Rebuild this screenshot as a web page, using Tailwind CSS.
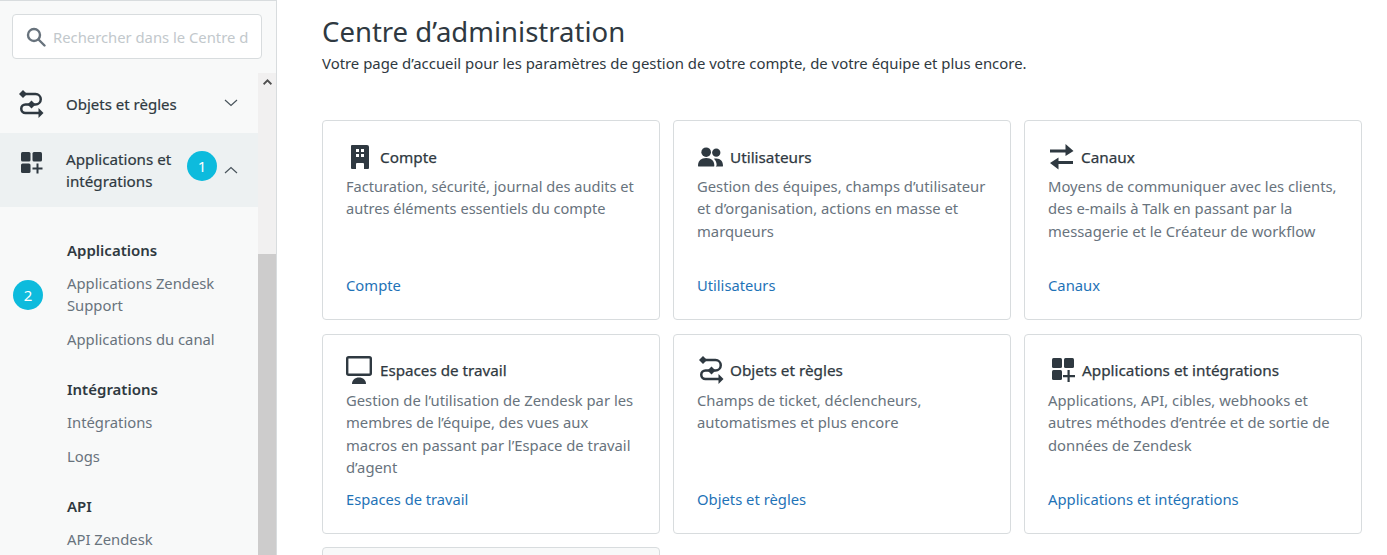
<!DOCTYPE html>
<html lang="fr">
<head>
<meta charset="utf-8">
<script src="https://cdn.jsdelivr.net/npm/@tailwindcss/browser@4"></script>
<title>Centre d'administration</title>
</head>
<body class="bg-white overflow-hidden font-['Noto_Sans',sans-serif]">
<div class="flex h-[555px] w-[1387px] overflow-hidden">
  <aside class="relative w-[277px] shrink-0 h-full bg-[#f8f9f9] border-r border-t border-[#d8dcde] flex flex-col">
    <div class="px-3 pt-[13px] h-[72px] shrink-0">
      <div class="h-[45px] w-[250px] bg-white border border-[#d8dcde] rounded-[4px] flex items-center pl-[13px] overflow-hidden">
        <svg class="w-[20px] h-[20px] shrink-0" viewBox="0 0 20 20" fill="none" stroke="#68737d" stroke-width="2.400"><circle cx="8" cy="8" r="6"/><path d="M12.500 12.500l6 6" stroke-linecap="round"/></svg>
        <span class="ml-[7px] mt-[2px] text-[14.800px] text-[#c2c8cc] whitespace-nowrap overflow-hidden w-[195px]">Rechercher dans le Centre d</span>
      </div>
    </div>
    <div class="flex flex-1 min-h-0">
      <nav class="w-[258px] shrink-0 overflow-hidden">
        <div class="h-[60px] flex items-center relative">
          <svg class="absolute left-[19px] top-[17px] w-[25px] h-[28px]" viewBox="0 0 24 28" fill="none" stroke="#2f3941" stroke-width="2.500"><path d="M4 4H16a5.200 5.200 0 0 1 0 10.500H6a4.250 4.250 0 0 0 0 8.500H20"/><path d="M-0.500 4l4-4 4 4-4 4z" fill="#2f3941" stroke="none"/><path d="M8 14.500l4-4 4 4-4 4z" fill="#2f3941" stroke="none"/><path d="M19 18l5 5-5 5z" fill="#2f3941" stroke="none"/></svg>
          <span class="ml-[66px] mt-[3px] text-[15px] text-[#2f3941] [-webkit-text-stroke:0.2px_#2f3941]">Objets et règles</span>
          <svg class="absolute left-[224px] top-[26px] w-[14px] h-[8px]" viewBox="0 0 14 8" fill="none" stroke="#49545c" stroke-width="1.200"><path d="M1 1l6 5.500L13 1"/></svg>
        </div>
        <div class="h-[74px] bg-[#edf1f2] relative pt-[15px]">
          <svg class="absolute left-[21px] top-[19px] w-[23px] h-[23px]" viewBox="0 0 23 23" fill="#2f3941"><rect x="0" y="0" width="9.500" height="9.500" rx="1.500"/><rect x="11.500" y="0" width="9.500" height="9.500" rx="1.500"/><rect x="0" y="11.500" width="9.500" height="9.500" rx="1.500"/><path d="M15.500 11.500h2v4h4v2h-4v4h-2v-4h-4v-2h4z"/></svg>
          <p class="ml-[66px] text-[15.200px] leading-[22px] text-[#2f3941] [-webkit-text-stroke:0.2px_#2f3941] w-[120px]">Applications et intégrations</p>
          <div class="absolute left-[187px] top-[18px] w-[30px] h-[30px] rounded-full bg-[#0dbbdd] text-white text-[15px] flex items-center justify-center">1</div>
          <svg class="absolute left-[224px] top-[33px] w-[14px] h-[8px]" viewBox="0 0 14 8" fill="none" stroke="#49545c" stroke-width="1.200"><path d="M1 7l6-5.500L13 7"/></svg>
        </div>
        <div class="relative pl-[67px] pt-[32px] text-[14.800px] leading-[22px] text-[#68737d]">
          <p class="text-[15px] font-semibold text-[#2f3941]">Applications</p>
          <p class="mt-[11px] w-[170px]">Applications Zendesk Support</p>
          <p class="mt-[12px]">Applications du canal</p>
          <p class="mt-[28px] text-[15px] font-semibold text-[#2f3941]">Intégrations</p>
          <p class="mt-[11px]">Intégrations</p>
          <p class="mt-[12px]">Logs</p>
          <p class="mt-[28px] text-[15px] font-semibold text-[#2f3941]">API</p>
          <p class="mt-[11px]">API Zendesk</p>
          <div class="absolute left-[13px] top-[73px] w-[30px] h-[30px] rounded-full bg-[#0dbbdd] text-white text-[15px] flex items-center justify-center">2</div>
        </div>
      </nav>
      <div class="w-[18px] shrink-0 bg-[#f1f0f0] flex flex-col">
        <div class="h-[181px] flex justify-center pt-[6px]">
          <svg class="w-[9px] h-[6px]" viewBox="0 0 9 6" fill="#505050"><path d="M4.500 0L9 4.500 7.800 6 4.500 2.800 1.200 6 0 4.500z"/></svg>
        </div>
        <div class="flex-1 bg-[#cdcccc]"></div>
      </div>
    </div>
  </aside>

  <main class="flex-1 min-w-0 pl-[45px] pr-[25px]">
    <h1 class="mt-[13px] text-[27.500px] leading-[38px] text-[#2f3941]">Centre d’administration</h1>
    <p class="mt-[1px] text-[14.900px] leading-[22px] text-[#2f3941]">Votre page d’accueil pour les paramètres de gestion de votre compte, de votre équipe et plus encore.</p>
    <div class="mt-[46px] grid grid-cols-[338px_338px_338px] gap-x-[13px] gap-y-[14px] auto-rows-[200px]">

      <article class="border border-[#d8dcde] rounded-[4px] pl-[23px] pr-[20px] pt-[22px] flex flex-col">
        <div class="flex items-center h-[28px] gap-[10px]">
          <svg class="w-[20px] h-[24px] ml-[4px] shrink-0" viewBox="0 0 20 24" fill="#2f3941"><path fill-rule="evenodd" d="M2 0h15a2 2 0 0 1 2 2v21a1 1 0 0 1-1 1h-4v-5a1 1 0 0 0-1-1H7a1 1 0 0 0-1 1v5H2a1 1 0 0 1-1-1V1a1 1 0 0 1 1-1zM6 4v3h3V4zm5 0v3h3V4zM6 9v3h3V9zm5 0v3h3V9z"/></svg>
          <h2 class="text-[15.300px] text-[#2f3941] [-webkit-text-stroke:0.25px_#2f3941]">Compte</h2>
        </div>
        <p class="mt-[4px] text-[14.600px] leading-[22.400px] text-[#68737d]">Facturation, sécurité, journal des audits et autres éléments essentiels du compte</p>
        <a class="mt-auto mb-[23px] text-[14.800px] leading-[22px] text-[#1f73b7]">Compte</a>
      </article>

      <article class="border border-[#d8dcde] rounded-[4px] pl-[23px] pr-[20px] pt-[22px] flex flex-col">
        <div class="flex items-center h-[28px] gap-[8px]">
          <svg class="w-[25px] h-[20px] ml-[1px] -mr-[1px] shrink-0" viewBox="0 0 26 20" fill="#2f3941"><circle cx="8.500" cy="5" r="5"/><circle cx="19" cy="5.500" r="4.300"/><path d="M0 19c0-5 3-8 8.500-8s8.500 3 8.500 8a1 1 0 0 1-1 1H1a1 1 0 0 1-1-1z"/><path d="M18.500 20h6.500a1 1 0 0 0 1-1c0-4.500-2.500-7.500-7-7.500-1 0-1.800.1-2.500.4 1.800 1.500 2.900 3.900 2.900 6.600z"/></svg>
          <h2 class="text-[15.300px] text-[#2f3941] [-webkit-text-stroke:0.25px_#2f3941]">Utilisateurs</h2>
        </div>
        <p class="mt-[4px] text-[14.800px] leading-[22.400px] text-[#68737d]">Gestion des équipes, champs d’utilisateur et d’organisation, actions en masse et marqueurs</p>
        <a class="mt-auto mb-[23px] text-[14.700px] leading-[22px] text-[#1f73b7]">Utilisateurs</a>
      </article>

      <article class="border border-[#d8dcde] rounded-[4px] pl-[23px] pr-[20px] pt-[22px] flex flex-col">
        <div class="flex items-center h-[28px] gap-[8px]">
          <svg class="w-[25px] h-[26px] ml-[1px] -mr-[1px] shrink-0" viewBox="0 0 25 26" fill="#2f3941"><path d="M1 5.500h15.500V0L24.500 7 16.500 12V8.500H1z"/><path d="M24 17v3H9.500v5.500L1 19 9.500 13.500V17z"/></svg>
          <h2 class="text-[15.300px] text-[#2f3941] [-webkit-text-stroke:0.25px_#2f3941]">Canaux</h2>
        </div>
        <p class="mt-[4px] text-[14.800px] leading-[22.400px] text-[#68737d]">Moyens de communiquer avec les clients, des e-mails à Talk en passant par la messagerie et le Créateur de workflow</p>
        <a class="mt-auto mb-[23px] text-[14.800px] leading-[22px] text-[#1f73b7]">Canaux</a>
      </article>

      <article class="border border-[#d8dcde] rounded-[4px] pl-[23px] pr-[20px] pt-[21px] flex flex-col">
        <div class="flex items-center h-[28px] gap-[8px]">
          <svg class="w-[26px] h-[28px] shrink-0" viewBox="0 0 26 28" fill="none"><rect x="1.200" y="1.200" width="23.600" height="17.600" rx="1.500" stroke="#2f3941" stroke-width="2.400"/><path d="M6 28c0-4 3-6.500 7-6.500s7 2.500 7 6.500z" fill="#2f3941"/></svg>
          <h2 class="text-[15.200px] text-[#2f3941] [-webkit-text-stroke:0.25px_#2f3941]">Espaces de travail</h2>
        </div>
        <p class="mt-[5px] text-[14.800px] leading-[22.400px] text-[#68737d]">Gestion de l’utilisation de Zendesk par les membres de l’équipe, des vues aux macros en passant par l’Espace de travail d’agent</p>
        <a class="mt-auto mb-[23px] text-[14.700px] leading-[22px] text-[#1f73b7]">Espaces de travail</a>
      </article>

      <article class="border border-[#d8dcde] rounded-[4px] pl-[23px] pr-[20px] pt-[21px] flex flex-col">
        <div class="flex items-center h-[28px] gap-[8px]">
          <svg class="w-[25px] h-[28px] ml-[2px] -mr-[2px] shrink-0" viewBox="0 0 24 28" fill="none" stroke="#2f3941" stroke-width="2.500"><path d="M4 4H16a5.200 5.200 0 0 1 0 10.500H6a4.250 4.250 0 0 0 0 8.500H20"/><path d="M-0.500 4l4-4 4 4-4 4z" fill="#2f3941" stroke="none"/><path d="M8 14.500l4-4 4 4-4 4z" fill="#2f3941" stroke="none"/><path d="M19 18l5 5-5 5z" fill="#2f3941" stroke="none"/></svg>
          <h2 class="text-[15.300px] text-[#2f3941] [-webkit-text-stroke:0.25px_#2f3941]">Objets et règles</h2>
        </div>
        <p class="mt-[5px] text-[14.800px] leading-[22.400px] text-[#68737d]">Champs de ticket, déclencheurs, automatismes et plus encore</p>
        <a class="mt-auto mb-[23px] text-[14.800px] leading-[22px] text-[#1f73b7]">Objets et règles</a>
      </article>

      <article class="border border-[#d8dcde] rounded-[4px] pl-[23px] pr-[20px] pt-[21px] flex flex-col">
        <div class="flex items-center h-[28px] gap-[6px]">
          <svg class="w-[26px] h-[24px] ml-[3px] -mr-[1px] shrink-0" viewBox="0 0 26 24" fill="#2f3941"><rect x="1" y="0" width="10" height="10" rx="1.500"/><rect x="13" y="0" width="10" height="10" rx="1.500"/><rect x="1" y="12" width="10" height="10" rx="1.500"/><path d="M16.500 12h2.200v5H24v2.200h-5.300V24h-2.200v-4.800H12V17h4.500z"/></svg>
          <h2 class="text-[15.300px] text-[#2f3941] [-webkit-text-stroke:0.25px_#2f3941]">Applications et intégrations</h2>
        </div>
        <p class="mt-[5px] text-[14.800px] leading-[22.400px] text-[#68737d]">Applications, API, cibles, webhooks et autres méthodes d’entrée et de sortie de données de Zendesk</p>
        <a class="mt-auto mb-[23px] text-[14.800px] leading-[22px] text-[#1f73b7]">Applications et intégrations</a>
      </article>

      <article class="-mt-[1px] border border-[#d8dcde] rounded-[4px] bg-[#f8f9f9]"></article>
    </div>
  </main>
</div>
</body>
</html>
